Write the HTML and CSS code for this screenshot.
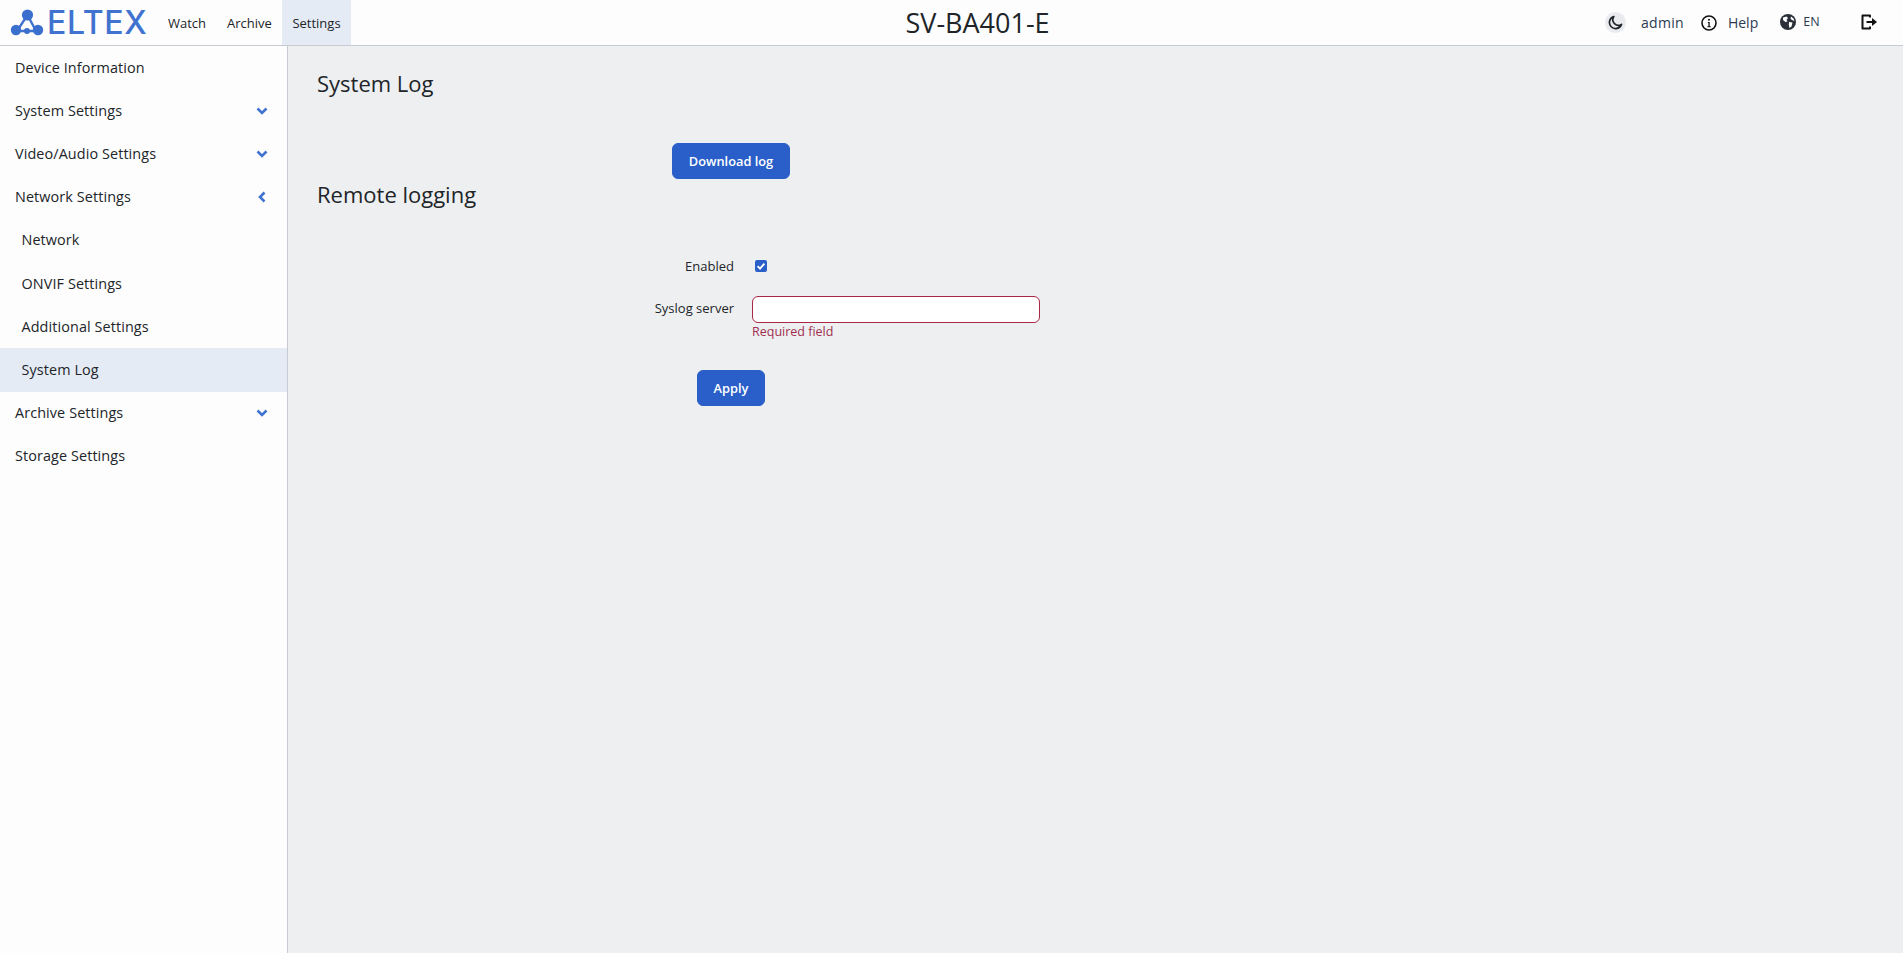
FILE: index.html
```html
<!DOCTYPE html>
<html lang="en">
<head>
<meta charset="utf-8">
<title>SV-BA401-E</title>
<link rel="stylesheet" href="styles.css">
</head>
<body>
<header class="topbar">
  <div class="brand">
    <svg class="brand-mark" viewBox="0 0 34 30" width="34" height="30" aria-hidden="true">
      <path d="M17.5 8 L7 24 L26 24 Z" fill="none" stroke="#3f73cf" stroke-width="2.4"/>
      <circle cx="17.5" cy="8" r="5.6" fill="#3b6fce"/>
      <circle cx="6" cy="23" r="5.2" fill="#3b6fce"/>
      <circle cx="28" cy="23" r="5.2" fill="#3b6fce"/>
      <circle cx="17" cy="24" r="3" fill="#3b6fce"/>
    </svg>
    <span class="brand-name">ELTEX</span>
  </div>
  <nav class="topnav">
    <a class="topnav-item">Watch</a>
    <a class="topnav-item">Archive</a>
    <a class="topnav-item topnav-item-active">Settings</a>
  </nav>
  <div class="device-title">SV-BA401-E</div>
  <div class="tools">
    <span class="theme-toggle">
      <svg viewBox="0 0 16 16" width="15" height="15" aria-hidden="true"><path d="M6.2 1.6 A6.6 6.6 0 1 0 14.4 10 A6 6 0 0 1 6.2 1.6 Z" fill="none" stroke="#212529" stroke-width="1.8" stroke-linejoin="round"/></svg>
    </span>
    <span class="tool-text user">admin</span>
    <svg class="info-icon" viewBox="0 0 16 16" width="16" height="16" aria-hidden="true">
      <circle cx="8" cy="8" r="7" fill="none" stroke="#111" stroke-width="1.6"/>
      <circle cx="8" cy="4.7" r="1" fill="#111"/>
      <path d="M6.8 7h1.9v4.2h1v1H6.4v-1h1V8h-.6z" fill="#111"/>
    </svg>
    <span class="tool-text help">Help</span>
    <svg class="globe-icon" viewBox="0 0 16 16" width="16" height="16" aria-hidden="true">
      <circle cx="8" cy="8" r="8" fill="#2b3038"/>
      <path d="M3 3.5 L6.5 2.5 L8 4 L6.5 6 L7.5 7.5 L5.5 8 L3 6 Z M9 8 L12.5 8.5 L11.5 12.5 L9.5 14 L8.8 11 Z M11 2.5 L13.5 4.5 L14.5 7 L12 6 L10.5 4.5 Z" fill="#fff"/>
    </svg>
    <span class="tool-text lang">EN</span>
    <svg class="logout-icon" viewBox="0 0 16 16" width="16" height="16" aria-hidden="true">
      <path d="M9 3.5V1.5H1.5V14.5H9V12.5" fill="none" stroke="#111" stroke-width="2" stroke-linejoin="round"/>
      <path d="M5.5 7H11V4L16 8L11 12V9H5.5Z" fill="#111"/>
    </svg>
  </div>
</header>
<div class="shell">
  <aside class="sidebar">
    <a class="menu-item">Device Information</a>
    <a class="menu-item">System Settings<svg class="chev" viewBox="0 0 12 8" width="12" height="8" aria-hidden="true"><path d="M1.5 1.5L6 6L10.5 1.5"/></svg></a>
    <a class="menu-item">Video/Audio Settings<svg class="chev" viewBox="0 0 12 8" width="12" height="8" aria-hidden="true"><path d="M1.5 1.5L6 6L10.5 1.5"/></svg></a>
    <a class="menu-item">Network Settings<svg class="chev chev-left" viewBox="0 0 8 12" width="8" height="12" aria-hidden="true"><path d="M6.5 1.5L2 6L6.5 10.5"/></svg></a>
    <a class="menu-item menu-sub">Network</a>
    <a class="menu-item menu-sub">ONVIF Settings</a>
    <a class="menu-item menu-sub">Additional Settings</a>
    <a class="menu-item menu-sub menu-active">System Log</a>
    <a class="menu-item">Archive Settings<svg class="chev" viewBox="0 0 12 8" width="12" height="8" aria-hidden="true"><path d="M1.5 1.5L6 6L10.5 1.5"/></svg></a>
    <a class="menu-item">Storage Settings</a>
  </aside>
  <main class="content">
    <h2 class="section-title">System Log</h2>
    <div class="action-row"><button class="btn" type="button">Download log</button></div>
    <h2 class="section-title section-remote">Remote logging</h2>
    <form class="log-form">
      <label class="form-label label-check">Enabled</label>
      <div class="form-check"><span class="checkbox"><svg viewBox="0 0 12 12" width="12" height="12" aria-hidden="true"><path d="M2.6 6.2L5 8.6L9.4 3.6" fill="none" stroke="#fff" stroke-width="1.9"/></svg></span></div>
      <label class="form-label label-input">Syslog server</label>
      <div class="form-field">
        <input class="text-input" type="text">
        <div class="field-error">Required field</div>
      </div>
    </form>
    <div class="action-row action-apply"><button class="btn" type="button">Apply</button></div>
  </main>
</div>
</body>
</html>
```
FILE: styles.css
```css
* { box-sizing: border-box; }
html, body { height: 100%; }
body {
  margin: 0;
  font-family: "Open Sans", "Noto Sans", sans-serif;
  font-size: 14px;
  color: #212529;
  background: #eeeff1;
  overflow: hidden;
}
.topbar {
  height: 46px;
  display: flex;
  align-items: stretch;
  background: #fdfdfd;
  border-bottom: 1px solid #c8cad2;
}
.brand {
  display: flex;
  align-items: center;
  width: 157px;
  padding-left: 10px;
}
.brand-mark { margin-top: -1px; flex: none; }
.brand-name {
  font-family: "Inter", "Open Sans", sans-serif;
  font-size: 32px;
  font-weight: 500;
  line-height: 1;
  color: #3f73cf;
  margin-left: 3px;
  letter-spacing: 0.7px;
}
.topnav { display: flex; margin-left: 0; }
.topnav-item {
  display: flex;
  align-items: center;
  padding: 0 11px;
  font-size: 13px;
}
.topnav-item:nth-child(2) { margin-left: -1px; }
.topnav-item-active { background: #e5ebf5; margin-left: -1px; padding: 0 10.5px; }
.device-title {
  flex: 1;
  text-align: center;
  font-size: 27px;
  line-height: 45px;
  padding-left: 4px;
}
.tools {
  display: flex;
  align-items: center;
  width: 303px;
  flex: none;
  padding-left: 5px;
}
.theme-toggle {
  width: 21px;
  height: 21px;
  border-radius: 50%;
  background: #e9ebef;
  display: flex;
  align-items: center;
  justify-content: center;
}
.tool-text { color: #2b3a52; }
.user { margin-left: 15px; letter-spacing: 0.3px; }
.info-icon { margin-left: 17px; }
.help { margin-left: 11px; }
.globe-icon { margin-left: 22px; margin-top: -2px; }
.lang { margin-left: 7px; font-size: 12.5px; margin-top: -3px; }
.logout-icon { margin-left: 41px; margin-top: -1px; }
.shell { display: flex; height: calc(100% - 46px); }
.sidebar {
  width: 288px;
  flex: none;
  background: #fdfdfd;
  border-right: 1px solid #c8cad2;
}
.menu-item {
  display: flex;
  align-items: center;
  justify-content: space-between;
  height: 43.2px;
  padding: 0 19px 0 15px;
  font-size: 14.4px;
  line-height: 20px;
  letter-spacing: 0.1px;
}
.menu-sub { padding-left: 21.5px; }
.menu-active { background: #e5ebf5; }
.chev { fill: none; stroke: #3f73cf; stroke-width: 2.6; }
.chev-left { margin-right: 2px; }
.content { flex: 1; padding: 0 29px; }
.section-title {
  margin: 0;
  font-size: 22px;
  font-weight: 400;
  line-height: 30px;
  padding-top: 22px;
}
.action-row { width: 828px; display: flex; justify-content: center; }
.btn {
  height: 36px;
  padding: 0 16px;
  font: 600 12.8px "Open Sans", sans-serif;
  color: #fff;
  background: #2a5fc9;
  border: 1px solid #2a5fc9;
  border-radius: 6px;
}
.section-title + .action-row { margin-top: 45px; }
.section-remote { padding-top: 0; margin-top: 0; }
.log-form {
  display: grid;
  grid-template-columns: 417px 288px;
  column-gap: 18px;
  margin-top: 47px;
  width: 828px;
}
.form-label { text-align: right; font-size: 13px; }
.label-check { line-height: 20px; }
.form-check { height: 20px; display: flex; align-items: center; padding-left: 3px; }
.checkbox {
  width: 12px;
  height: 12px;
  border-radius: 2px;
  background: #2a5fc9;
  display: block;
}
.checkbox svg { display: block; }
.label-input { line-height: 20px; margin-top: 22px; }
.form-field { margin-top: 20px; }
.text-input {
  display: block;
  width: 288px;
  height: 27px;
  background: #fff;
  border: 1px solid #a92845;
  border-radius: 6px;
  padding: 0 8px;
  outline: none;
}
.field-error { color: #a03050; font-size: 12.5px; line-height: 16px; margin-top: 1px; }
.action-apply { margin-top: 30px; }
```
